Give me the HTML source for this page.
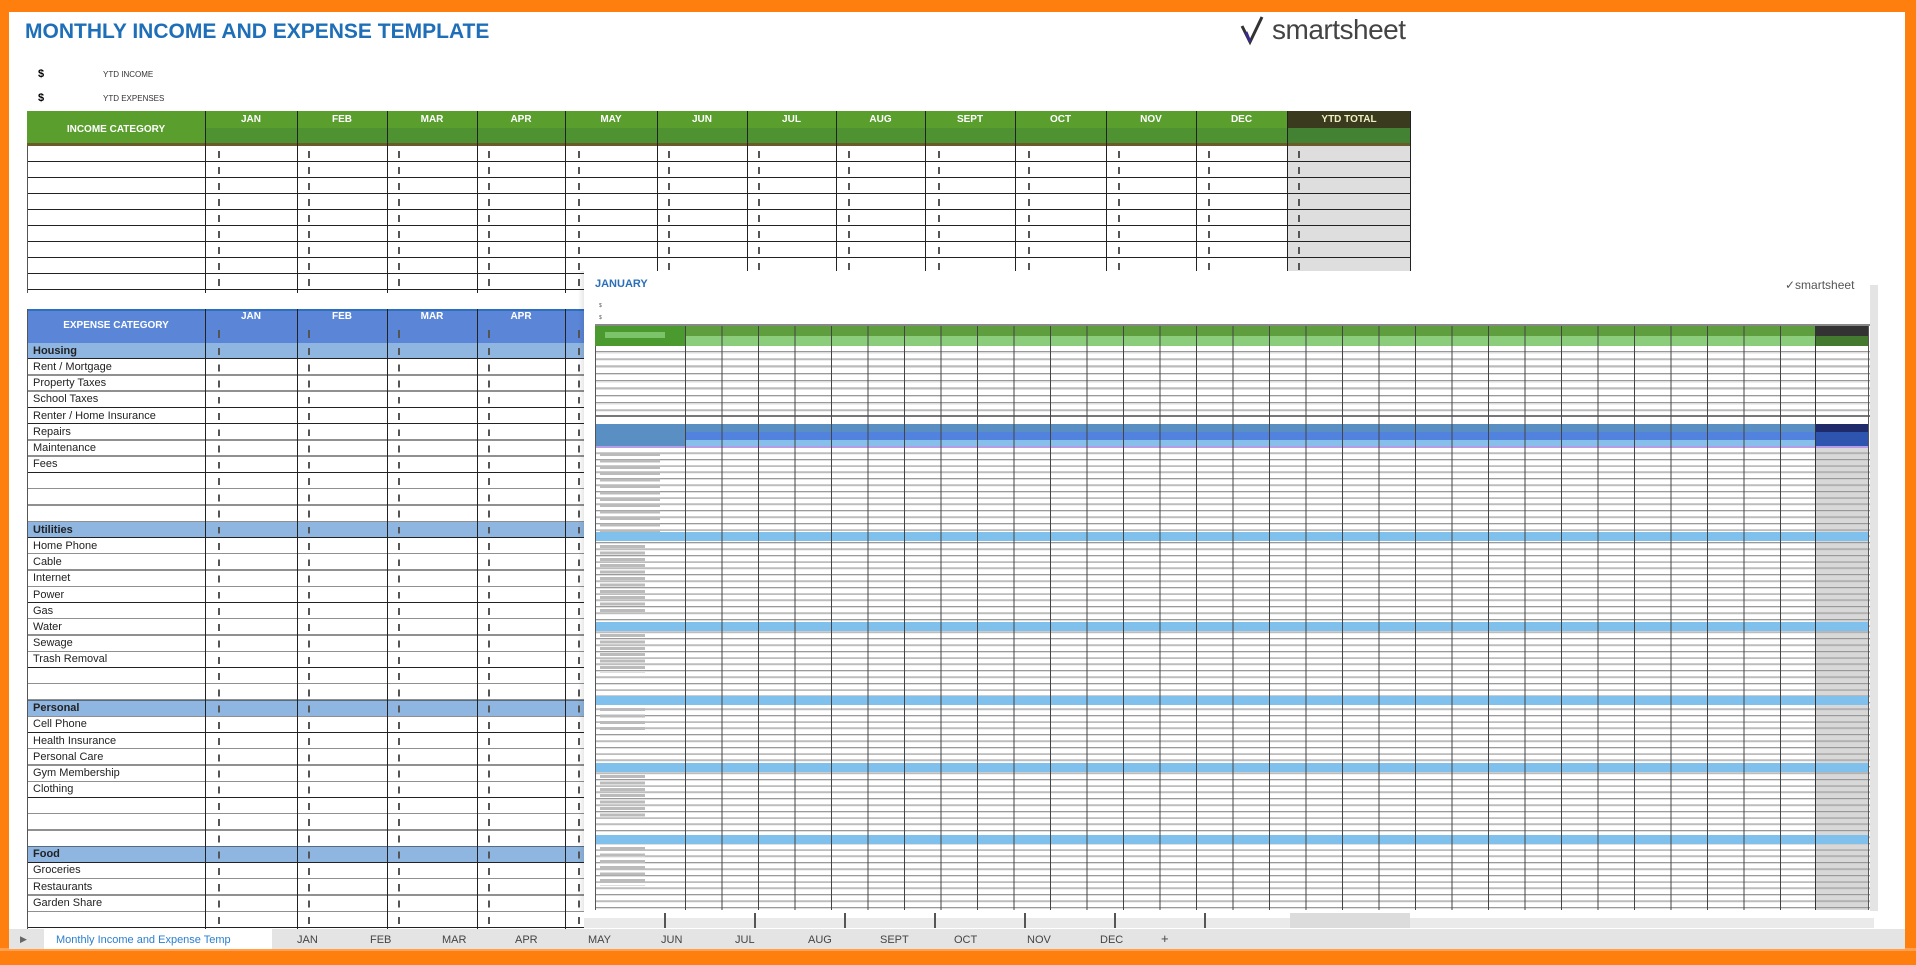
<!DOCTYPE html>
<html><head><meta charset="utf-8">
<style>
*{margin:0;padding:0;box-sizing:border-box}
body{width:1916px;height:965px;position:relative;overflow:hidden;background:#ff7f0e;font-family:"Liberation Sans",Arial,sans-serif}
.a{position:absolute}
#page{left:9px;top:12px;width:1896px;height:938px;background:#fff}
.hd{color:#fff;font-weight:bold;font-size:10px;text-align:center}
.vl{position:absolute;width:1px;background:#222}
.lbl{position:absolute;font-size:11px;color:#222;left:33px;white-space:nowrap}
.cat{font-weight:bold}
.tab{position:absolute;top:934px;font-size:11px;color:#444}
</style></head><body>
<div class="a" id="page"></div>
<div class="a" style="left:0;top:948px;width:1916px;height:3px;background:#ffa050"></div>

<div class="a" style="left:25px;top:20px;font-size:21px;font-weight:bold;color:#1e6fb8;letter-spacing:0px">MONTHLY INCOME AND EXPENSE TEMPLATE</div>
<svg class="a" style="left:1240px;top:14px" width="30" height="34" viewBox="0 0 30 34"><path d="M2 12 L10 28 L22 3" fill="none" stroke="#333" stroke-width="3"/><path d="M6 18 L10 28" stroke="#3a2a8a" stroke-width="3"/></svg>
<div class="a" style="left:1272px;top:14px;font-size:28px;color:#444;letter-spacing:-0.5px">smartsheet</div>

<div class="a" style="left:38px;top:68px;font-size:11px;font-weight:bold">$</div>
<div class="a" style="left:103px;top:70px;font-size:8px;color:#333">YTD INCOME</div>
<div class="a" style="left:38px;top:92px;font-size:11px;font-weight:bold">$</div>
<div class="a" style="left:103px;top:94px;font-size:8px;color:#333">YTD EXPENSES</div>

<!-- income table -->
<div class="a" style="left:27px;top:111px;width:1260px;height:34px;background:#5a9e2e"></div>
<div class="a" style="left:205px;top:128px;width:1082px;height:15px;background:#4e9232"></div>
<div class="a" style="left:27px;top:143px;width:1384px;height:3px;background:#6b5a2a"></div>
<div class="a" style="left:1287px;top:111px;width:124px;height:17px;background:#3a3a1e"></div>
<div class="a" style="left:1287px;top:128px;width:124px;height:15px;background:#438232"></div>
<div class="a hd" style="left:27px;top:124px;width:178px">INCOME CATEGORY</div>
<div class="a hd" style="left:205px;top:114px;width:92px">JAN</div>
<div class="a hd" style="left:297px;top:114px;width:90px">FEB</div>
<div class="a hd" style="left:387px;top:114px;width:90px">MAR</div>
<div class="a hd" style="left:477px;top:114px;width:88px">APR</div>
<div class="a hd" style="left:565px;top:114px;width:92px">MAY</div>
<div class="a hd" style="left:657px;top:114px;width:90px">JUN</div>
<div class="a hd" style="left:747px;top:114px;width:89px">JUL</div>
<div class="a hd" style="left:836px;top:114px;width:89px">AUG</div>
<div class="a hd" style="left:925px;top:114px;width:90px">SEPT</div>
<div class="a hd" style="left:1015px;top:114px;width:91px">OCT</div>
<div class="a hd" style="left:1106px;top:114px;width:90px">NOV</div>
<div class="a hd" style="left:1196px;top:114px;width:91px">DEC</div>
<div class="a hd" style="left:1287px;top:114px;width:124px;color:#f0f0c0">YTD TOTAL</div>
<div class="a" style="left:1287px;top:146px;width:124px;height:147px;background:#dedede"></div>
<div class="a" style="left:27px;top:146px;width:1384px;height:147px;background:repeating-linear-gradient(to bottom,transparent 0 15px,#222 15px 16px)"></div>
<div class="a" style="left:27px;top:146px;width:1px;height:147px;background:#555"></div>
<div class="vl" style="left:205px;top:111px;height:182px"></div>
<div class="vl" style="left:297px;top:111px;height:182px"></div>
<div class="vl" style="left:387px;top:111px;height:182px"></div>
<div class="vl" style="left:477px;top:111px;height:182px"></div>
<div class="vl" style="left:565px;top:111px;height:182px"></div>
<div class="vl" style="left:657px;top:111px;height:182px"></div>
<div class="vl" style="left:747px;top:111px;height:182px"></div>
<div class="vl" style="left:836px;top:111px;height:182px"></div>
<div class="vl" style="left:925px;top:111px;height:182px"></div>
<div class="vl" style="left:1015px;top:111px;height:182px"></div>
<div class="vl" style="left:1106px;top:111px;height:182px"></div>
<div class="vl" style="left:1196px;top:111px;height:182px"></div>
<div class="vl" style="left:1287px;top:111px;height:182px"></div>
<div class="vl" style="left:1410px;top:111px;height:182px"></div>
<div class="a" style="left:0;top:150px;width:1916px;height:143px;background:
repeating-linear-gradient(to bottom,transparent 0 1px,#555 1px 8px,transparent 8px 16px) 218px 0/2px 100% no-repeat,
repeating-linear-gradient(to bottom,transparent 0 1px,#555 1px 8px,transparent 8px 16px) 308px 0/2px 100% no-repeat,
repeating-linear-gradient(to bottom,transparent 0 1px,#555 1px 8px,transparent 8px 16px) 398px 0/2px 100% no-repeat,
repeating-linear-gradient(to bottom,transparent 0 1px,#555 1px 8px,transparent 8px 16px) 488px 0/2px 100% no-repeat,
repeating-linear-gradient(to bottom,transparent 0 1px,#555 1px 8px,transparent 8px 16px) 578px 0/2px 100% no-repeat,
repeating-linear-gradient(to bottom,transparent 0 1px,#555 1px 8px,transparent 8px 16px) 668px 0/2px 100% no-repeat,
repeating-linear-gradient(to bottom,transparent 0 1px,#555 1px 8px,transparent 8px 16px) 758px 0/2px 100% no-repeat,
repeating-linear-gradient(to bottom,transparent 0 1px,#555 1px 8px,transparent 8px 16px) 848px 0/2px 100% no-repeat,
repeating-linear-gradient(to bottom,transparent 0 1px,#555 1px 8px,transparent 8px 16px) 938px 0/2px 100% no-repeat,
repeating-linear-gradient(to bottom,transparent 0 1px,#555 1px 8px,transparent 8px 16px) 1028px 0/2px 100% no-repeat,
repeating-linear-gradient(to bottom,transparent 0 1px,#555 1px 8px,transparent 8px 16px) 1118px 0/2px 100% no-repeat,
repeating-linear-gradient(to bottom,transparent 0 1px,#555 1px 8px,transparent 8px 16px) 1208px 0/2px 100% no-repeat,
repeating-linear-gradient(to bottom,transparent 0 1px,#555 1px 8px,transparent 8px 16px) 1298px 0/2px 100% no-repeat"></div>

<!-- expense table -->
<div class="a" style="left:27px;top:309px;width:560px;height:34px;background:#5b86d8"></div>
<div class="a" style="left:27px;top:309px;width:560px;height:2px;background:#2e6fc0"></div>
<div class="a hd" style="left:27px;top:320px;width:178px">EXPENSE CATEGORY</div>
<div class="a hd" style="left:205px;top:311px;width:92px">JAN</div>
<div class="a hd" style="left:297px;top:311px;width:90px">FEB</div>
<div class="a hd" style="left:387px;top:311px;width:90px">MAR</div>
<div class="a hd" style="left:477px;top:311px;width:88px">APR</div>
<div class="a" style="left:27px;top:343px;width:560px;height:16px;background:#8fb6e0"></div>
<div class="a" style="left:27px;top:522px;width:560px;height:16px;background:#8fb6e0"></div>
<div class="a" style="left:27px;top:700px;width:560px;height:16px;background:#8fb6e0"></div>
<div class="a" style="left:27px;top:846px;width:560px;height:16px;background:#8fb6e0"></div>
<div class="a" style="left:27px;top:343px;width:560px;height:586px;background:repeating-linear-gradient(to bottom,transparent 0 15.25px,#222 15.25px 16.25px)"></div>
<div class="a" style="left:27px;top:309px;width:1px;height:620px;background:#555"></div>
<div class="vl" style="left:205px;top:309px;height:620px"></div>
<div class="vl" style="left:297px;top:309px;height:620px"></div>
<div class="vl" style="left:387px;top:309px;height:620px"></div>
<div class="vl" style="left:477px;top:309px;height:620px"></div>
<div class="vl" style="left:565px;top:309px;height:620px"></div>
<div class="a" style="left:0;top:330px;width:600px;height:8px;background:
linear-gradient(#555,#555) 218px 0/2px 100% no-repeat,
linear-gradient(#555,#555) 308px 0/2px 100% no-repeat,
linear-gradient(#555,#555) 398px 0/2px 100% no-repeat,
linear-gradient(#555,#555) 488px 0/2px 100% no-repeat,
linear-gradient(#555,#555) 578px 0/2px 100% no-repeat"></div>
<div class="a" style="left:0;top:344px;width:600px;height:585px;background:
repeating-linear-gradient(to bottom,transparent 0 4px,#555 4px 11px,transparent 11px 16.25px) 218px 0/2px 100% no-repeat,
repeating-linear-gradient(to bottom,transparent 0 4px,#555 4px 11px,transparent 11px 16.25px) 308px 0/2px 100% no-repeat,
repeating-linear-gradient(to bottom,transparent 0 4px,#555 4px 11px,transparent 11px 16.25px) 398px 0/2px 100% no-repeat,
repeating-linear-gradient(to bottom,transparent 0 4px,#555 4px 11px,transparent 11px 16.25px) 488px 0/2px 100% no-repeat,
repeating-linear-gradient(to bottom,transparent 0 4px,#555 4px 11px,transparent 11px 16.25px) 578px 0/2px 100% no-repeat"></div>
<div class="lbl cat" style="top:345px">Housing</div>
<div class="lbl" style="top:361px">Rent / Mortgage</div>
<div class="lbl" style="top:377px">Property Taxes</div>
<div class="lbl" style="top:393px">School Taxes</div>
<div class="lbl" style="top:410px">Renter / Home Insurance</div>
<div class="lbl" style="top:426px">Repairs</div>
<div class="lbl" style="top:442px">Maintenance</div>
<div class="lbl" style="top:458px">Fees</div>
<div class="lbl cat" style="top:524px">Utilities</div>
<div class="lbl" style="top:540px">Home Phone</div>
<div class="lbl" style="top:556px">Cable</div>
<div class="lbl" style="top:572px">Internet</div>
<div class="lbl" style="top:589px">Power</div>
<div class="lbl" style="top:605px">Gas</div>
<div class="lbl" style="top:621px">Water</div>
<div class="lbl" style="top:637px">Sewage</div>
<div class="lbl" style="top:653px">Trash Removal</div>
<div class="lbl cat" style="top:702px">Personal</div>
<div class="lbl" style="top:718px">Cell Phone</div>
<div class="lbl" style="top:735px">Health Insurance</div>
<div class="lbl" style="top:751px">Personal Care</div>
<div class="lbl" style="top:767px">Gym Membership</div>
<div class="lbl" style="top:783px">Clothing</div>
<div class="lbl cat" style="top:848px">Food</div>
<div class="lbl" style="top:864px">Groceries</div>
<div class="lbl" style="top:881px">Restaurants</div>
<div class="lbl" style="top:897px">Garden Share</div>

<!-- overlay -->
<div class="a" style="left:578px;top:271px;width:8px;height:640px;background:linear-gradient(to right,rgba(0,0,0,0),rgba(0,0,0,.12))"></div>
<div class="a" style="left:584px;top:271px;width:1300px;height:640px;background:#fff"></div>
<div class="a" style="left:1870px;top:285px;width:8px;height:626px;background:#e4e4e4"></div>
<div class="a" style="left:595px;top:278px;font-size:11px;font-weight:bold;color:#2a6fb8">JANUARY</div>
<div class="a" style="left:599px;top:303px;font-size:5px;color:#555">$</div>
<div class="a" style="left:599px;top:315px;font-size:5px;color:#555">$</div>
<div class="a" style="left:1785px;top:278px;font-size:12px;color:#555">✓smartsheet</div>
<div class="a" style="left:595px;top:324px;width:1275px;height:2px;background:#888"></div>
<div class="a" style="left:595px;top:326px;width:1220px;height:10px;background:#5e9e3f"></div>
<div class="a" style="left:595px;top:336px;width:1220px;height:10px;background:#8ccd7c"></div>
<div class="a" style="left:1815px;top:326px;width:53px;height:10px;background:#333"></div>
<div class="a" style="left:1815px;top:336px;width:53px;height:10px;background:#437a30"></div>
<div class="a" style="left:1815px;top:346px;width:53px;height:70px;background:#dcdcdc"></div>
<div class="a" style="left:595px;top:346px;width:1275px;height:70px;background:repeating-linear-gradient(to bottom,#fff 0 5px,#999 5px 6px,#ddd 6px 7.3px)"></div>
<div class="a" style="left:595px;top:415px;width:1275px;height:2px;background:#777"></div>
<div class="a" style="left:595px;top:424px;width:1220px;height:8px;background:#5a8fc3"></div>
<div class="a" style="left:595px;top:432px;width:1220px;height:8px;background:#5182de"></div>
<div class="a" style="left:595px;top:440px;width:1220px;height:6px;background:#86c0ea"></div>
<div class="a" style="left:1815px;top:424px;width:53px;height:8px;background:#1e2a6a"></div>
<div class="a" style="left:1815px;top:432px;width:53px;height:14px;background:#2d55b0"></div>
<div class="a" style="left:595px;top:446px;width:1273px;height:2px;background:#b79ce6"></div>
<div class="a" style="left:595px;top:448px;width:1275px;height:462px;background:repeating-linear-gradient(to bottom,#fff 0 4.5px,#9a9a9a 4.5px 5.5px,#e0e0e0 5.5px 6.4px)"></div>
<div class="a" style="left:1815px;top:448px;width:53px;height:462px;background:repeating-linear-gradient(to bottom,#d8d8d8 0 4.5px,#999 4.5px 5.5px,#ccc 5.5px 6.4px)"></div>
<div class="a" style="left:595px;top:532px;width:1273px;height:9px;background:#7fc0ec"></div>
<div class="a" style="left:595px;top:622px;width:1273px;height:9px;background:#7fc0ec"></div>
<div class="a" style="left:595px;top:696px;width:1273px;height:9px;background:#7fc0ec"></div>
<div class="a" style="left:595px;top:763px;width:1273px;height:9px;background:#7fc0ec"></div>
<div class="a" style="left:595px;top:835px;width:1273px;height:9px;background:#7fc0ec"></div>
<div class="a" style="left:595px;top:326px;width:90px;height:20px;background:#4a9a30"></div>
<div class="a" style="left:605px;top:332px;width:60px;height:6px;background:#7cc46a"></div>
<div class="a" style="left:595px;top:424px;width:90px;height:22px;background:#5a8fc3"></div>
<div class="a" style="left:595px;top:346px;width:1px;height:564px;background:#555"></div>
<div class="a" style="left:685px;top:326px;width:1130px;height:584px;background:repeating-linear-gradient(to right,#444 0 1px,transparent 1px 36.5px)"></div>
<div class="a" style="left:1815px;top:326px;width:1px;height:584px;background:#333"></div>
<div class="a" style="left:1868px;top:326px;width:1px;height:584px;background:#555"></div>
<div class="a" style="left:600px;top:452px;width:60px;height:80px;background:repeating-linear-gradient(to bottom,transparent 0 1px,#bbb 1px 4px,transparent 4px 6.4px)"></div>
<div class="a" style="left:600px;top:544px;width:45px;height:70px;background:repeating-linear-gradient(to bottom,transparent 0 1px,#bbb 1px 4px,transparent 4px 6.4px)"></div>
<div class="a" style="left:600px;top:633px;width:45px;height:40px;background:repeating-linear-gradient(to bottom,transparent 0 1px,#bbb 1px 4px,transparent 4px 6.4px)"></div>
<div class="a" style="left:600px;top:707px;width:45px;height:25px;background:repeating-linear-gradient(to bottom,transparent 0 1px,#bbb 1px 4px,transparent 4px 6.4px)"></div>
<div class="a" style="left:600px;top:774px;width:45px;height:45px;background:repeating-linear-gradient(to bottom,transparent 0 1px,#bbb 1px 4px,transparent 4px 6.4px)"></div>
<div class="a" style="left:600px;top:846px;width:45px;height:40px;background:repeating-linear-gradient(to bottom,transparent 0 1px,#bbb 1px 4px,transparent 4px 6.4px)"></div>

<!-- bottom strip below overlay -->
<div class="a" style="left:584px;top:911px;width:1290px;height:17px;background:#fff"></div>
<div class="a" style="left:584px;top:918px;width:1290px;height:10px;background:#eaeaea"></div>
<div class="a" style="left:584px;top:913px;width:700px;height:15px;background:repeating-linear-gradient(to right,transparent 0 80px,#555 80px 82px,transparent 82px 90px)"></div>
<div class="a" style="left:1290px;top:913px;width:120px;height:15px;background:#dcdcdc"></div>

<!-- tab bar -->
<div class="a" style="left:9px;top:929px;width:1896px;height:20px;background:#e4e4e4"></div>
<div class="a" style="left:20px;top:934px;font-size:9px;color:#666">▶</div>
<div class="a" style="left:44px;top:929px;width:228px;height:20px;background:#fff"></div>
<div class="tab" style="left:56px;color:#2a7fd0">Monthly Income and Expense Temp</div>
<div class="tab" style="left:297px">JAN</div>
<div class="tab" style="left:370px">FEB</div>
<div class="tab" style="left:442px">MAR</div>
<div class="tab" style="left:515px">APR</div>
<div class="tab" style="left:588px">MAY</div>
<div class="tab" style="left:661px">JUN</div>
<div class="tab" style="left:735px">JUL</div>
<div class="tab" style="left:808px">AUG</div>
<div class="tab" style="left:880px">SEPT</div>
<div class="tab" style="left:954px">OCT</div>
<div class="tab" style="left:1027px">NOV</div>
<div class="tab" style="left:1100px">DEC</div>
<div class="tab" style="left:1161px;font-size:13px;top:931px">+</div>
</body></html>
